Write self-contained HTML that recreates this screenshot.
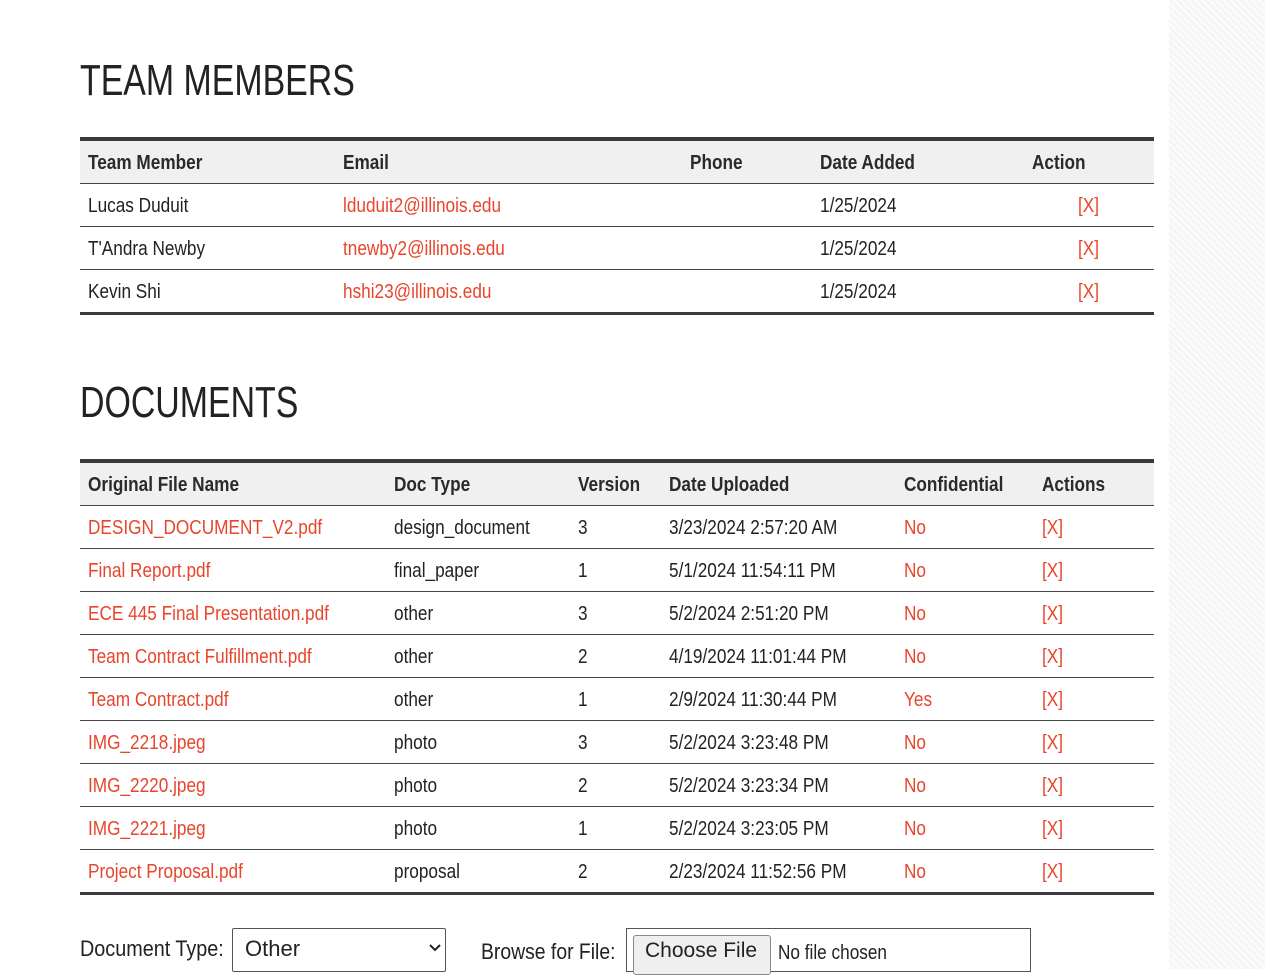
<!DOCTYPE html>
<html><head><meta charset="utf-8"><style>
body{margin:0;width:1265px;height:969px;overflow:hidden;background:#fff;font-family:"Liberation Sans",sans-serif;color:#222;position:relative}
.side{position:absolute;left:1169px;top:0;width:96px;height:969px;background:repeating-linear-gradient(45deg,#f4f4f4 0 2px,#fbfbfb 2px 5px)}
h1{position:absolute;margin:0;font-weight:normal;font-size:44px;transform:scaleX(.77);transform-origin:0 0;color:#222;letter-spacing:0}
.bar{position:absolute;left:80px;width:1074px;background:#3a3a3a}
.hdr{position:absolute;left:80px;width:1074px;background:#f0f0f0}
.line{position:absolute;left:80px;width:1074px;height:1px;background:#444}
.t{position:absolute;font-size:20px;white-space:nowrap;transform:scaleX(.86);transform-origin:0 50%;line-height:24px}
.b{font-weight:bold;color:#2a2a2a}
.r{color:#e8452c}
.sel{position:absolute;left:232px;top:928px;width:214px;height:44px;border:1px solid #555;border-radius:2px;box-sizing:border-box}
.file{position:absolute;left:626px;top:928px;width:405px;height:44px;border:1px solid #555;box-sizing:border-box}
.btn{position:absolute;left:633px;top:935px;width:138px;height:40px;border:1px solid #888;border-radius:3px;background:#efefef;box-sizing:border-box}
</style></head><body>
<div class="side"></div>
<h1 style="left:80px;top:56px">TEAM MEMBERS</h1>
<div class="bar" style="top:137px;height:4px"></div>
<div class="hdr" style="top:141px;height:42px"></div>
<div class="line" style="top:183px"></div>
<div class="line" style="top:226px"></div>
<div class="line" style="top:269px"></div>
<div class="bar" style="top:312px;height:3px"></div>
<div class="t b" style="left:88px;top:151px">Team Member</div>
<div class="t b" style="left:343px;top:151px">Email</div>
<div class="t b" style="left:690px;top:151px">Phone</div>
<div class="t b" style="left:820px;top:151px">Date Added</div>
<div class="t b" style="left:1032px;top:151px">Action</div>
<div class="t" style="left:88px;top:194px">Lucas Duduit</div><div class="t r" style="left:343px;top:194px">lduduit2@illinois.edu</div><div class="t" style="left:820px;top:194px">1/25/2024</div><div class="t r" style="left:1078px;top:194px">[X]</div>
<div class="t" style="left:88px;top:237px">T'Andra Newby</div><div class="t r" style="left:343px;top:237px">tnewby2@illinois.edu</div><div class="t" style="left:820px;top:237px">1/25/2024</div><div class="t r" style="left:1078px;top:237px">[X]</div>
<div class="t" style="left:88px;top:280px">Kevin Shi</div><div class="t r" style="left:343px;top:280px">hshi23@illinois.edu</div><div class="t" style="left:820px;top:280px">1/25/2024</div><div class="t r" style="left:1078px;top:280px">[X]</div>

<h1 style="left:80px;top:378px">DOCUMENTS</h1>
<div class="bar" style="top:459px;height:4px"></div>
<div class="hdr" style="top:463px;height:42px"></div>
<div class="line" style="top:505px"></div>
<div class="line" style="top:548px"></div>
<div class="line" style="top:591px"></div>
<div class="line" style="top:634px"></div>
<div class="line" style="top:677px"></div>
<div class="line" style="top:720px"></div>
<div class="line" style="top:763px"></div>
<div class="line" style="top:806px"></div>
<div class="line" style="top:849px"></div>
<div class="bar" style="top:892px;height:3px"></div>
<div class="t b" style="left:88px;top:473px">Original File Name</div>
<div class="t b" style="left:394px;top:473px">Doc Type</div>
<div class="t b" style="left:578px;top:473px">Version</div>
<div class="t b" style="left:669px;top:473px">Date Uploaded</div>
<div class="t b" style="left:904px;top:473px">Confidential</div>
<div class="t b" style="left:1042px;top:473px">Actions</div>

<div class="t r" style="left:88px;top:516px">DESIGN_DOCUMENT_V2.pdf</div><div class="t" style="left:394px;top:516px">design_document</div><div class="t" style="left:578px;top:516px">3</div><div class="t" style="left:669px;top:516px">3/23/2024 2:57:20 AM</div><div class="t r" style="left:904px;top:516px">No</div><div class="t r" style="left:1042px;top:516px">[X]</div>
<div class="t r" style="left:88px;top:559px">Final Report.pdf</div><div class="t" style="left:394px;top:559px">final_paper</div><div class="t" style="left:578px;top:559px">1</div><div class="t" style="left:669px;top:559px">5/1/2024 11:54:11 PM</div><div class="t r" style="left:904px;top:559px">No</div><div class="t r" style="left:1042px;top:559px">[X]</div>
<div class="t r" style="left:88px;top:602px">ECE 445 Final Presentation.pdf</div><div class="t" style="left:394px;top:602px">other</div><div class="t" style="left:578px;top:602px">3</div><div class="t" style="left:669px;top:602px">5/2/2024 2:51:20 PM</div><div class="t r" style="left:904px;top:602px">No</div><div class="t r" style="left:1042px;top:602px">[X]</div>
<div class="t r" style="left:88px;top:645px">Team Contract Fulfillment.pdf</div><div class="t" style="left:394px;top:645px">other</div><div class="t" style="left:578px;top:645px">2</div><div class="t" style="left:669px;top:645px">4/19/2024 11:01:44 PM</div><div class="t r" style="left:904px;top:645px">No</div><div class="t r" style="left:1042px;top:645px">[X]</div>
<div class="t r" style="left:88px;top:688px">Team Contract.pdf</div><div class="t" style="left:394px;top:688px">other</div><div class="t" style="left:578px;top:688px">1</div><div class="t" style="left:669px;top:688px">2/9/2024 11:30:44 PM</div><div class="t r" style="left:904px;top:688px">Yes</div><div class="t r" style="left:1042px;top:688px">[X]</div>
<div class="t r" style="left:88px;top:731px">IMG_2218.jpeg</div><div class="t" style="left:394px;top:731px">photo</div><div class="t" style="left:578px;top:731px">3</div><div class="t" style="left:669px;top:731px">5/2/2024 3:23:48 PM</div><div class="t r" style="left:904px;top:731px">No</div><div class="t r" style="left:1042px;top:731px">[X]</div>
<div class="t r" style="left:88px;top:774px">IMG_2220.jpeg</div><div class="t" style="left:394px;top:774px">photo</div><div class="t" style="left:578px;top:774px">2</div><div class="t" style="left:669px;top:774px">5/2/2024 3:23:34 PM</div><div class="t r" style="left:904px;top:774px">No</div><div class="t r" style="left:1042px;top:774px">[X]</div>
<div class="t r" style="left:88px;top:817px">IMG_2221.jpeg</div><div class="t" style="left:394px;top:817px">photo</div><div class="t" style="left:578px;top:817px">1</div><div class="t" style="left:669px;top:817px">5/2/2024 3:23:05 PM</div><div class="t r" style="left:904px;top:817px">No</div><div class="t r" style="left:1042px;top:817px">[X]</div>
<div class="t r" style="left:88px;top:860px">Project Proposal.pdf</div><div class="t" style="left:394px;top:860px">proposal</div><div class="t" style="left:578px;top:860px">2</div><div class="t" style="left:669px;top:860px">2/23/2024 11:52:56 PM</div><div class="t r" style="left:904px;top:860px">No</div><div class="t r" style="left:1042px;top:860px">[X]</div>

<div class="t" style="left:80px;top:937px;font-size:22px;transform:scaleX(.9)">Document Type:</div>
<div class="sel"></div>
<div class="t" style="left:245px;top:937px;font-size:22px;transform:none">Other</div>
<svg style="position:absolute;left:428px;top:943px" width="14" height="10"><path d="M2 2 L7 7 L12 2" stroke="#222" stroke-width="2" fill="none"/></svg>
<div class="t" style="left:481px;top:940px;font-size:22px;transform:scaleX(.88)">Browse for File:</div>
<div class="file"></div>
<div class="btn"></div>
<div class="t" style="left:645px;top:939px;font-size:21px;transform:none">Choose File</div>
<div class="t" style="left:778px;top:941px;font-size:20px">No file chosen</div>
</body></html>
